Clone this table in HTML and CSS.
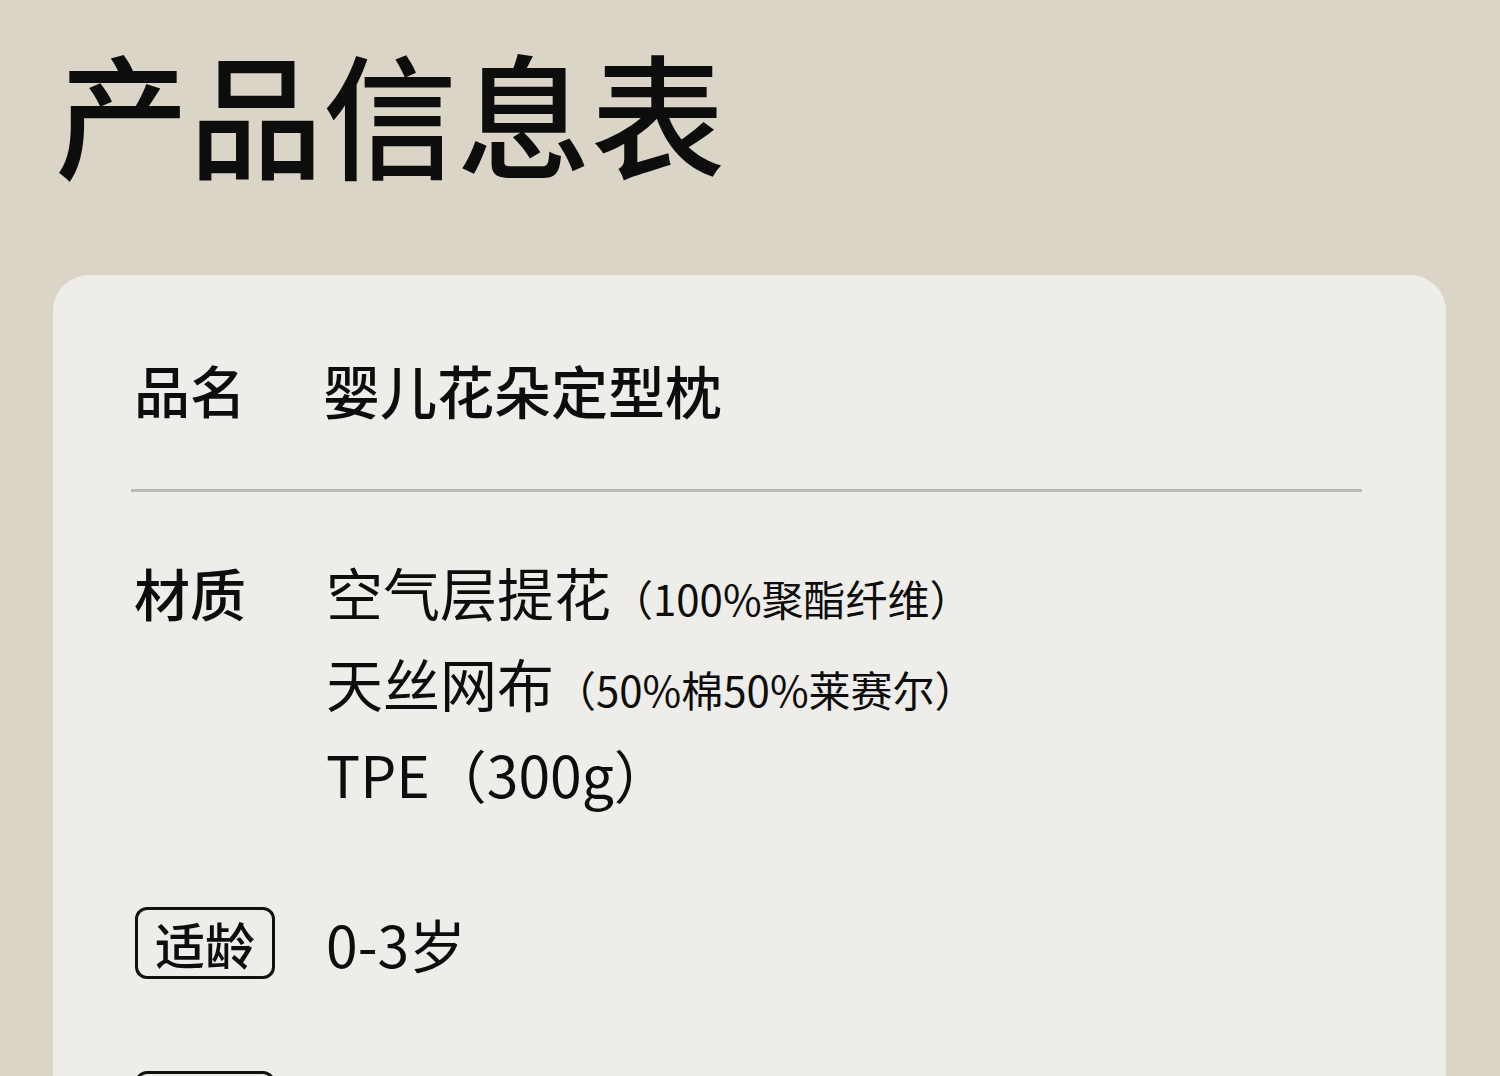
FILE: index.html
```html
<!DOCTYPE html>
<html lang="zh-CN">
<head>
<meta charset="utf-8">
<title>产品信息表</title>
<link rel="stylesheet" href="styles.css">
</head>
<body>
<main class="page">
  <h1 class="title">产品信息表</h1>
  <section class="card">
    <div class="row row-name">
      <div class="label">品名</div>
      <div class="value value-strong">婴儿花朵定型枕</div>
    </div>
    <div class="divider"></div>
    <div class="row row-material">
      <div class="label">材质</div>
      <div class="value value-plain">
        <div class="line">空气层提花<span class="note">（100%聚酯纤维）</span></div>
        <div class="line">天丝网布<span class="note">（50%棉50%莱赛尔）</span></div>
        <div class="line">TPE（300g）</div>
      </div>
    </div>
    <div class="row row-badge">
      <div class="label"><span class="badge">适龄</span></div>
      <div class="value value-plain">0-3岁</div>
    </div>
    <div class="row row-badge row-next">
      <div class="label"><span class="badge">尺寸</span></div>
      <div class="value value-plain">30×25cm</div>
    </div>
  </section>
</main>
</body>
</html>
```
FILE: styles.css
```css
html, body {
  margin: 0;
  padding: 0;
  background: #dbd5c8;
}
body {
  font-family: "Noto Sans CJK SC", "Noto Sans", sans-serif;
  color: #0d0d0d;
}
.page {
  padding: 44px 0 60px 53px;
  width: 1393px;
}
.title {
  margin: 0 0 97px 2px;
  font-size: 134px;
  line-height: 134px;
  font-weight: 500;
  letter-spacing: 0;
}
.card {
  background: #eeede9;
  border-radius: 36px;
  padding: 86px 84px 80px 82px;
}
.row {
  display: grid;
  grid-template-columns: 188px 1fr;
  align-items: start;
}
.label {
  font-size: 56px;
  line-height: 56px;
  font-weight: 500;
  margin-left: -1px;
}
.value {
  font-size: 57px;
  line-height: 56px;
  font-weight: 400;
}
.value-strong {
  font-weight: 500;
}
.value-plain {
  padding-left: 3px;
}
.divider {
  height: 3px;
  background: #bcbab5;
  margin: 72px 0 0 -4px;
}
.row-material {
  margin-top: 54px;
}
.row-material .label {
  line-height: 91px;
}
.line {
  height: 91px;
  line-height: 91px;
  white-space: nowrap;
}
.note {
  font-size: 42px;
  line-height: 1;
  vertical-align: baseline;
}
.row-badge {
  margin-top: 88px;
  align-items: center;
}
.row-next {
  margin-top: 92px;
}
.badge {
  display: inline-flex;
  align-items: center;
  justify-content: center;
  box-sizing: border-box;
  width: 140px;
  height: 72px;
  margin-left: 1px;
  border: 3px solid #111;
  border-radius: 12px;
  font-size: 50px;
  line-height: 50px;
  font-weight: 500;
}
```
